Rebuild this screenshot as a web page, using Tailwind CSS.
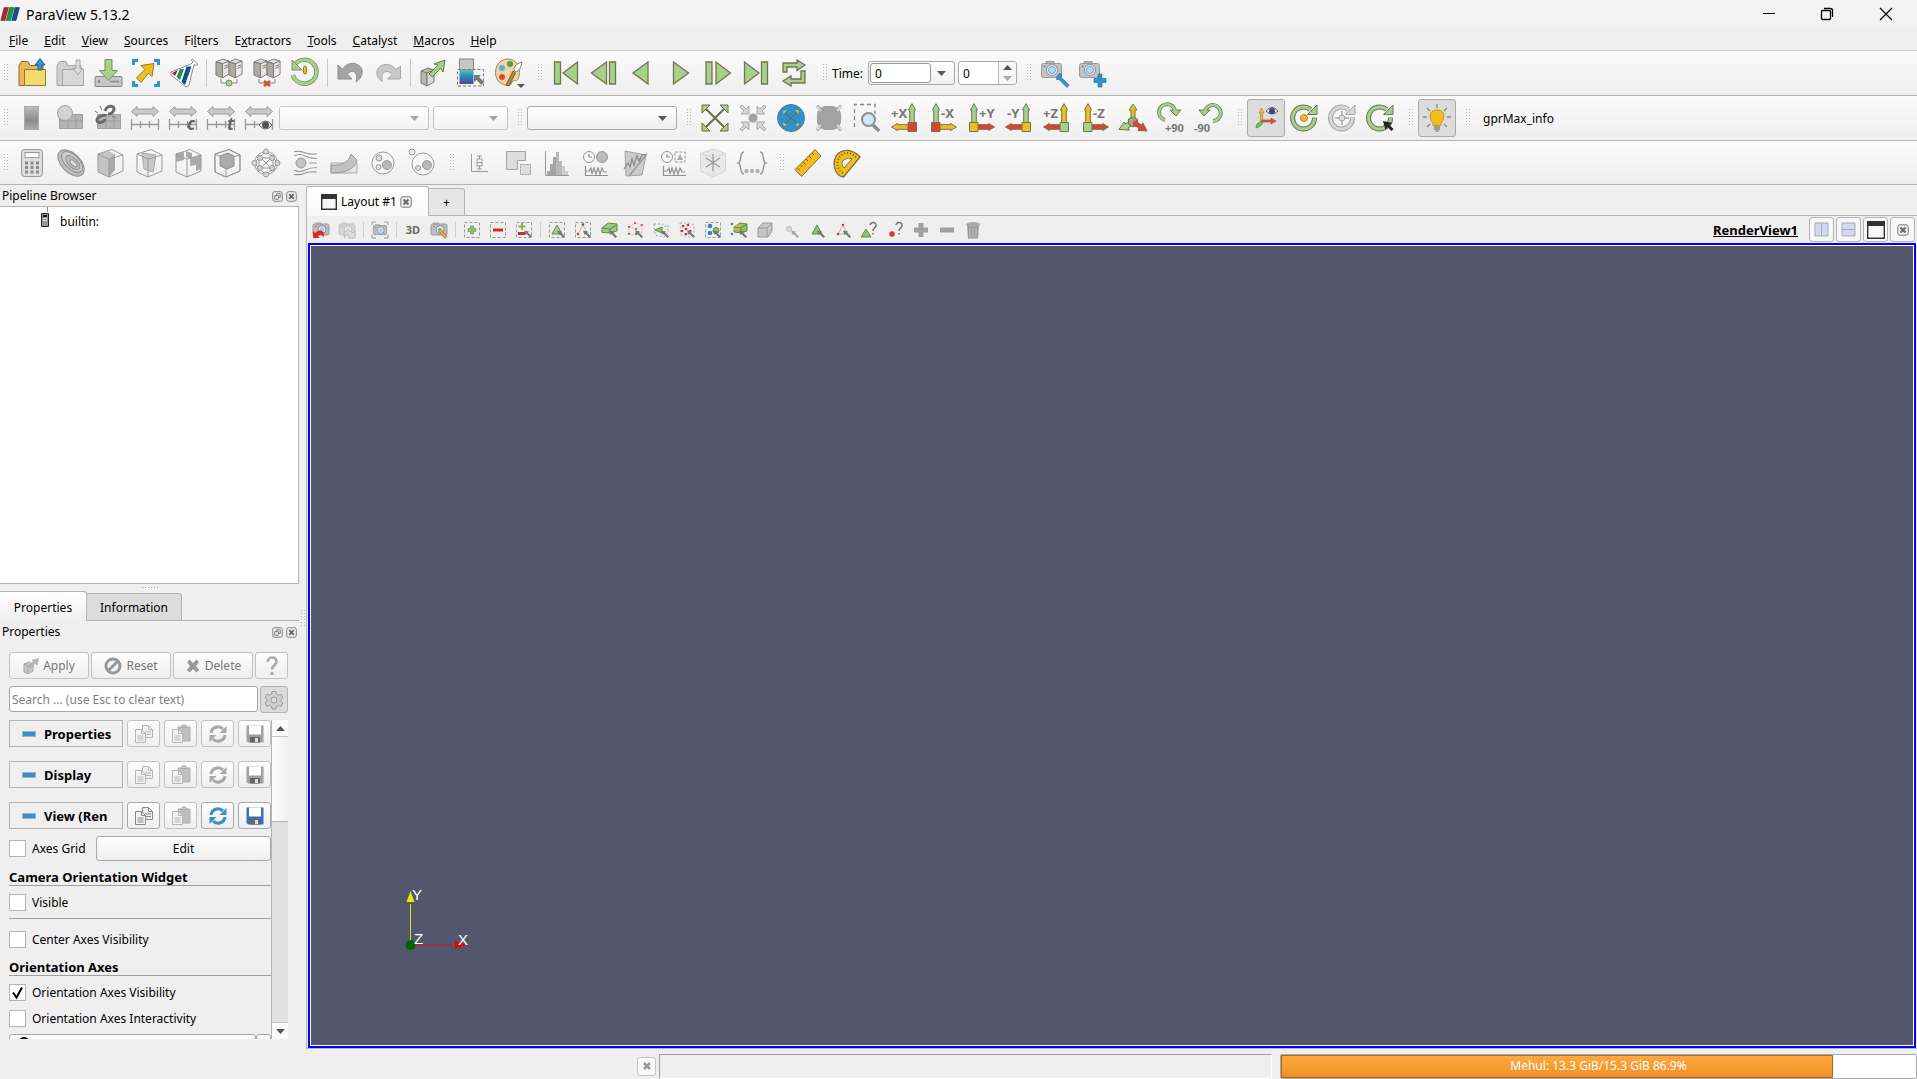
<!DOCTYPE html>
<html lang="en">
<head>
    <meta charset="UTF-8">
    <meta name="viewport" content="width=device-width, initial-scale=1.0">
    <title>ParaView 5.13.2</title>
    <script src="https://cdn.jsdelivr.net/npm/@tailwindcss/browser@4"></script>
</head>
<body class="h-screen overflow-hidden flex flex-col bg-[#efefef] text-black text-[12px] leading-4 font-['Noto_Sans','Open_Sans',sans-serif]">

    <!-- Shared icon parts -->
    <svg class="absolute size-0">
        <defs>
            <linearGradient id="cool" x1="0" y1="0" x2="0" y2="1"><stop offset="0" stop-color="#5cc4a8"/><stop offset=".4" stop-color="#2a8fc4"/><stop offset="1" stop-color="#5a3f96"/></linearGradient>
            <linearGradient id="greys" x1="0" y1="0" x2="0" y2="1"><stop offset="0" stop-color="#bbb"/><stop offset=".6" stop-color="#8c8c8c"/><stop offset="1" stop-color="#aaa"/></linearGradient>
        </defs>
        <symbol id="grip" viewBox="0 0 4 18"><path d="M0 .5H4M0 3.500H4M0 6.500H4M0 9.500H4M0 12.500H4M0 15.500H4" stroke="#b9b9b9" stroke-dasharray="1 2"/></symbol>
        <symbol id="up" viewBox="0 0 8 20"><path d="M4 .7 7.600 7H6.300V19.500H1.700V7H.4z" stroke="#74725a" stroke-linejoin="round"/></symbol>
        <symbol id="right" viewBox="0 0 18 8"><path d="M17.400 4 11.500 7.600V6.300H.5V1.700h11V.4z" stroke="#74725a"/></symbol>
        <symbol id="left" viewBox="0 0 18 8"><path d="M.6 4 6.500 7.600V6.300h11V1.700h-11V.4z" stroke="#74725a"/></symbol>
        <symbol id="out" viewBox="0 0 32 32"><path d="M7 7 25 25M25 7 7 25" stroke="#6b6a50" stroke-width="2"/><path d="M3 3h8l-8 8zM29 3h-8l8 8zM3 29h8l-8-8zM29 29h-8l8-8z" fill="#a6d189" stroke="#6b6a50"/></symbol>
        <symbol id="in" viewBox="0 0 32 32"><path d="M3 5 5 3l4 4 3-3v8H4l3-3zM29 5 27 3l-4 4-3-3v8h8l-3-3zM3 27l2 2 4-4 3 3v-8H4l3 3zM29 27l-2 2-4-4-3 3v-8h8l-3 3z" fill="#d5d5d5" stroke="#aaa"/></symbol>
        <symbol id="server" viewBox="0 0 16 22"><path d="M1 4 8 1l7 2-6 3z" fill="#ddd" stroke="#777"/><path d="M1 4l7 2v15l-7-3z" fill="#abac9c" stroke="#777"/><path d="M8 6l7-3v14l-7 4z" fill="#ece4e6" stroke="#777"/><path d="M10 8.500l4-1.500M10 11l4-2" stroke="#777"/></symbol>
        <symbol id="range" viewBox="0 0 32 32"><path d="M2.500 9.500 8 4.500V7h16V4.500l5.500 5L24 14.500V12H8v2.500z" fill="#c9c9c9" stroke="#9b9b9b"/><path d="M2.500 17v11M29.500 17v11M2.500 22.500h27M11.500 19v7M20.500 19v7" stroke="#999" stroke-width="1.300" fill="none"/></symbol>
        <symbol id="box" viewBox="0 0 32 32"><path d="M4 7 18 2.500 29 8V24L15 30 4 25zM4 7l11 5 14-4M15 12v18" fill="none" stroke="#999"/></symbol>
        <symbol id="camera" viewBox="0 0 32 32"><path d="M7 7h8V4.500H7z" fill="#bbb" stroke="#999"/><rect x="2.500" y="6.500" width="20" height="14" rx="2" fill="#c3c3c3" stroke="#999"/><circle cx="13" cy="13" r="5.500" fill="#e6f2fa" stroke="#8d8d8d"/><circle cx="13" cy="13" r="3.500" fill="#b9dcf3" stroke="#5fa7d6"/><circle cx="5.500" cy="9.500" r="1" fill="#888"/></symbol>
        <symbol id="cw" viewBox="0 0 32 32"><path d="M26.500 15.500A11 11 0 1 1 22.500 7.500" fill="none" stroke="#74725a" stroke-width="5"/><path d="M29 3v9.500H19.500z" fill="#a6d189" stroke="#74725a"/><path d="M26.500 16A11 11 0 1 1 23 8" fill="none" stroke="#a6d189" stroke-width="3"/></symbol>
        <symbol id="select" viewBox="0 0 18 18"><rect x="1.500" y="1.500" width="15" height="15" fill="none" stroke="#9a9a9a" stroke-dasharray="3 2"/></symbol>
        <symbol id="cursor" viewBox="0 0 18 18"><path d="M9 9.500l5 1-1 1 4 4-1.500 1.500-4-4-1 1z" fill="#777"/></symbol>
        <symbol id="cam18" viewBox="0 0 18 18"><rect x="1" y="3" width="16" height="11" rx="1.500" fill="#bdbdbd" stroke="#999"/><rect x="3" y="1.500" width="6" height="2" fill="#aaa"/><circle cx="10" cy="8.500" r="4" fill="#e4f0f8" stroke="#888"/><circle cx="10" cy="8.500" r="2.300" fill="#9fcdee"/><path d="M3 5.500h2" stroke="#d66"/></symbol>
        <symbol id="boxx" viewBox="0 0 12 12"><rect x=".8" y=".8" width="10.400" height="10.400" rx="2" fill="#efefef" stroke="#777"/><path d="M3.500 3.500l5 5M8.500 3.500l-5 5" stroke="#666" stroke-width="2"/></symbol>
        <symbol id="float" viewBox="0 0 12 12"><rect x=".8" y=".8" width="10.400" height="10.400" rx="2" fill="#efefef" stroke="#777"/><path d="M5 5V3h4v4H7M3 5h4v4H3z" fill="none" stroke="#777"/></symbol>
        <symbol id="copy" viewBox="0 0 20 20"><path d="M8.500 1.500h6l4 4v8h-10z" fill="#efefef" stroke="currentColor"/><path d="M14.500 1.500v4h4M11 8h6M11 10.500h6" fill="none" stroke="currentColor"/><path d="M1.500 5.500h6l4 4v9h-10z" fill="#f3f3f3" stroke="currentColor"/><path d="M7.500 5.500v4h4M3.500 12h6M3.500 14h6M3.500 16h6" fill="none" stroke="currentColor"/></symbol>
        <symbol id="paste" viewBox="0 0 20 20"><path d="M7 3h12v14H7z" fill="#bfbfbf" stroke="#b0b0b0"/><path d="M10 3.500 11.500 1h3L16 3.500z" fill="#ccc" stroke="#aaa"/><path d="M1.500 5.500h6l4 4v9h-10z" fill="#f3f3f3" stroke="#b5b5b5"/><path d="M7.500 5.500v4h4M3.500 12h6M3.500 14h6M3.500 16h6" fill="none" stroke="#b5b5b5"/></symbol>
        <symbol id="reload" viewBox="0 0 20 20"><path d="M3 9a7 7 0 0 1 12-4M17 11a7 7 0 0 1-12 4" fill="none" stroke="currentColor" stroke-width="3"/><path d="M18.500 2v7h-7zM1.500 18v-7h7z" fill="currentColor"/></symbol>
        <symbol id="disk" viewBox="0 0 20 20"><path d="M1.500 1.500h17v17H3l-1.500-1.500z" fill="currentColor"/><path d="M4 1.500h12v9H4z" fill="#fff"/><path d="M5 13h10v5.500H5z" fill="#666"/><path d="M10 14h3v4h-3z" fill="#ddd"/></symbol>
        <symbol id="minus" viewBox="0 0 14 6"><rect x=".5" y=".5" width="13" height="5" fill="#3193cb" stroke="#a9b0b0"/></symbol>
        <symbol id="rplay" viewBox="0 0 32 32"><path d="M8.500 5 23.500 16 8.500 27z" fill="#a6d189" stroke="#74725a" stroke-width="1.300"/></symbol>
    </svg>

    <!-- Title bar -->
    <header class="flex items-center h-7 shrink-0 pr-px bg-[#f3f3f3]">
        <svg class="w-5 h-4" viewBox="0 0 20 16"><g stroke-width=".5"><path d="M4 1.500h4.500L5 14.500H.8z" fill="#b5242c" stroke="#722"/><path d="M9.500 1.500H14l-3.500 13H6.200z" fill="#1e9447" stroke="#153"/><path d="M15 1.500h4.500L16 14.500h-4.300z" fill="#10508f" stroke="#123"/></g></svg>
        <h1 class="ml-1.5 pt-0.5 text-[14px]">ParaView 5.13.2</h1>
        <div class="ml-auto flex">
            <button aria-label="Minimize" class="w-[58px] h-7 grid place-items-center"><svg class="size-3" viewBox="0 0 12 12"><path d="M0 5.500h12" stroke="#000"/></svg></button>
            <button aria-label="Restore" class="w-[58px] h-7 grid place-items-center"><svg class="size-3.5" viewBox="0 0 14 14"><rect x="1.500" y="3.500" width="9" height="9" rx="1" fill="none" stroke="#000" stroke-width="1.300"/><path d="M4 1.500h6.500a2 2 0 0 1 2 2V10" fill="none" stroke="#000" stroke-width="1.300"/></svg></button>
            <button aria-label="Close" class="w-[60px] h-7 grid place-items-center"><svg class="size-3.5" viewBox="0 0 14 14"><path d="M1 1l12 12M13 1 1 13" stroke="#000" stroke-width="1.200"/></svg></button>
        </div>
    </header>

    <!-- Menu bar -->
    <nav class="flex items-center h-[23px] shrink-0 pl-px pt-1 border-b border-[#d3d3d3]">
        <button class="px-2"><u>F</u>ile</button>
        <button class="px-2"><u>E</u>dit</button>
        <button class="px-2"><u>V</u>iew</button>
        <button class="px-2"><u>S</u>ources</button>
        <button class="px-2">Fi<u>l</u>ters</button>
        <button class="px-2">E<u>x</u>tractors</button>
        <button class="px-2"><u>T</u>ools</button>
        <button class="px-2"><u>C</u>atalyst</button>
        <button class="px-2"><u>M</u>acros</button>
        <button class="px-2"><u>H</u>elp</button>
    </nav>

    <!-- Main toolbar -->
    <div class="flex items-center h-[45px] shrink-0 border-b border-[#b4b4b4] bg-linear-to-b from-[#fafafa] to-[#efefef]">
        <svg class="w-1 h-[18px] ml-1 mr-[5px]"><use href="#grip"/></svg>
        <button aria-label="Open" class="w-[38px] h-[38px] grid place-items-center"><svg class="size-8" viewBox="0 0 32 32"><path d="M3 8.500 5.500 4.500H12l2 4h13v20H3z" fill="#f0b45c" stroke="#8b6c36"/><path d="M8.500 12.500h21v16h-21z" fill="#f3da6d" stroke="#8b7a36"/><path d="M24 1.500 29 8h-3v5h-4V8h-3z" fill="#2e96d0" stroke="#23688f"/></svg></button>
        <button aria-label="Save state" class="w-[38px] h-[38px] grid place-items-center"><svg class="size-8" viewBox="0 0 32 32"><path d="M3 8.500 5.500 4.500H12l2 4h13v20H3z" fill="#cfcfcf" stroke="#a5a5a5"/><path d="M8.500 12.500h21v16h-21z" fill="#d8d8d8" stroke="#a5a5a5"/><path d="M24 17.500l5-6h-3V3h-4v8.500h-3z" fill="#dcdcdc" stroke="#a5a5a5"/></svg></button>
        <button aria-label="Save data" class="w-[38px] h-[38px] grid place-items-center"><svg class="size-8" viewBox="0 0 32 32"><rect x="3" y="19.500" width="27" height="10" rx="1" fill="#c6c6c6" stroke="#858585"/><circle cx="7" cy="24.500" r="1.200" fill="#777"/><path d="M18 24.500h9" stroke="#888" stroke-width="1.500"/><path d="M13 2.500h7v11h5.500l-9 10-9-10H13z" fill="#a6d189" stroke="#7a8c62"/></svg></button>
        <button aria-label="Load state" class="w-[38px] h-[38px] grid place-items-center"><svg class="size-8" viewBox="0 0 32 32"><path d="M2 8V2h6v3H5v3zM30 8V2h-6v3h3v3zM2 24v6h6v-3H5v-3zM30 24v6h-6v-3h3v-3z" fill="#3193cb"/><path d="M11 8.500l13-2-2 13-3.500-3.500L11 25.500 6.500 21l8.500-8.500z" fill="#f3bd18" stroke="#8b7a36"/></svg></button>
        <button aria-label="Catalyst" class="w-[38px] h-[38px] grid place-items-center"><svg class="size-8" viewBox="0 0 32 32"><path d="M24 2l6 5-2 1.500-2-1L21 28l-3 2L3 18v-3L23 7l2-2-1.500-1.500z" fill="#fff" stroke="#7d8ea5"/><path d="M4 16l6-3-3 6z" fill="#b5242c"/><path d="M12 12h4l-4 11-3.500-3z" fill="#1e9447"/><path d="M18.500 9.500h5L17 28l-3.500-3z" fill="#10508f"/></svg></button>
        <span class="w-px h-7 mx-[3px] bg-[#c9c9c9]"></span>
        <button aria-label="Connect" class="w-[38px] h-[38px] grid place-items-center"><svg class="size-8" viewBox="0 0 32 32"><use href="#server" x="2" y="1" width="15" height="21"/><use href="#server" x="15" y="1" width="15" height="21"/><path d="M8 22v4h16v-4" fill="none" stroke="#888"/><circle cx="16" cy="26" r="3" fill="#a6d189" stroke="#7a8c62"/></svg></button>
        <button aria-label="Disconnect" class="w-[38px] h-[38px] grid place-items-center"><svg class="size-8" viewBox="0 0 32 32"><use href="#server" x="2" y="1" width="15" height="21"/><use href="#server" x="15" y="1" width="15" height="21"/><path d="M8 22v4h16v-4" fill="none" stroke="#888"/><path d="M13 24l6 5M19 24l-6 5" stroke="#dc4434" stroke-width="2.500"/></svg></button>
        <button aria-label="Reset session" class="w-[38px] h-[38px] grid place-items-center"><svg class="size-8" viewBox="0 0 32 32"><path d="M5 9a12 12 0 1 1-1 9" fill="none" stroke="#7d8a66" stroke-width="4.500"/><path d="M5 9a12 12 0 1 1-1 9" fill="none" stroke="#a6d189" stroke-width="3"/><path d="M3 3v10h10z" fill="#a6d189" stroke="#7d8a66"/><rect x="14.500" y="9" width="3" height="8" rx="1.500" fill="#f3bd18" stroke="#8b7a36"/></svg></button>
        <span class="w-px h-7 mx-[3px] bg-[#c9c9c9]"></span>
        <button aria-label="Undo" class="w-[38px] h-[38px] grid place-items-center"><svg class="size-8" viewBox="0 0 32 32"><path d="M4 8v14h14l-5-4.500c5-6 12-3 9 7.500 9-6 8-17-2-18.500-5-.6-8.500 1.500-11.500 5.500z" fill="#a4a4a4" stroke="#8d8d8d"/></svg></button>
        <button aria-label="Redo" class="w-[38px] h-[38px] grid place-items-center"><svg class="size-8" viewBox="0 0 32 32"><path d="M28.500 9v13h-13l4.500-4.500c-5-6-12-3-9.500 7C2 20 3 9 13 7.500c5-.6 8 1.500 11 5z" fill="#c8c8c8" stroke="#a9a9a9"/></svg></button>
        <span class="w-px h-7 mx-[3px] bg-[#c9c9c9]"></span>
        <button aria-label="Auto apply" class="w-[38px] h-[38px] grid place-items-center"><svg class="size-8" viewBox="0 0 32 32"><path d="M4 14l7-3 6 2-7 3zM4 14v12l6 3V16" fill="#b9b9ae" stroke="#777"/><path d="M10 16l7-3v12l-7 4z" fill="#d8d8d8" stroke="#777"/><path d="M12 17l9-9-4-1 11-4-2 12-2.500-4-8 9z" fill="#a6d189" stroke="#5f7a48"/></svg></button>
        <button aria-label="Find data" class="w-[38px] h-[38px] grid place-items-center"><svg class="size-8" viewBox="0 0 32 32"><rect x="4.500" y="2" width="14" height="11" fill="#c6c6c6" stroke="#888"/><rect x="4.500" y="13" width="14" height="14" fill="url(#cool)"/><path d="M2.500 12.500h26v16.500h-26z" fill="none" stroke="#777" stroke-dasharray="3 2"/><path d="M19 18h7l-2 2 5 5-2.500 3-5-5-2.500 2z" fill="#777"/></svg></button>
        <button aria-label="Color palette" class="w-[38px] h-[38px] grid place-items-center"><svg class="size-8" viewBox="0 0 32 32"><path d="M15 2C4 2 0 14 4 22c3 6 10 7 13 6 2-.8 1-3 3-4s5 1 6-5C28 10 23 2 15 2z" fill="#f3d3a4" stroke="#a08655"/><circle cx="9" cy="11" r="3" fill="#4bb3e6"/><circle cx="17" cy="7" r="3" fill="#4f9e45"/><circle cx="9" cy="20" r="3" fill="#e04436"/><path d="M29 5c-7 2-8 6-8 8l2 2c4-2 5-5 6-10z" fill="#fff" stroke="#777"/><path d="M20 14l2.500 2L16 29l-3-1z" fill="#a98a4a" stroke="#76602e"/><path d="M24 27h8l-4 4z" fill="#555"/></svg></button>

        <svg class="w-1 h-[18px] ml-[10px] mr-[5px]"><use href="#grip"/></svg>
        <button aria-label="First frame" class="w-[38px] h-[38px] grid place-items-center"><svg class="size-8" viewBox="0 0 32 32"><path d="M4.500 5h6v22h-6zM27.500 5v22L13 16z" fill="#a6d189" stroke="#74725a" stroke-width="1.300"/></svg></button>
        <button aria-label="Previous frame" class="w-[38px] h-[38px] grid place-items-center"><svg class="size-8" viewBox="0 0 32 32"><path d="M21.500 5h6v22h-6zM18.500 5v22L3.500 16z" fill="#a6d189" stroke="#74725a" stroke-width="1.300"/></svg></button>
        <button aria-label="Reverse" class="w-[38px] h-[38px] grid place-items-center"><svg class="size-8" viewBox="0 0 32 32"><path d="M22 5 7 16l15 11z" fill="#a6d189" stroke="#74725a" stroke-width="1.300"/></svg></button>
        <button aria-label="Play" class="w-[38px] h-[38px] grid place-items-center"><svg class="size-8" viewBox="0 0 32 32"><use href="#rplay" x="1"/></svg></button>
        <button aria-label="Next frame" class="w-[38px] h-[38px] grid place-items-center"><svg class="size-8" viewBox="0 0 32 32"><path d="M4 5h6v22H4zM14 5v22L28.500 16z" fill="#a6d189" stroke="#74725a" stroke-width="1.300"/></svg></button>
        <button aria-label="Last frame" class="w-[38px] h-[38px] grid place-items-center"><svg class="size-8" viewBox="0 0 32 32"><path d="M21.500 5h6v22h-6zM4.500 5v22L19 16z" fill="#a6d189" stroke="#74725a" stroke-width="1.300"/></svg></button>
        <button aria-label="Loop" class="w-[38px] h-[38px] grid place-items-center"><svg class="size-8" viewBox="0 0 32 32"><path d="M5 15V6h14V3l8 5-8 5.500V10H9v5zM27 14v12H13v3l-8-5 8-5v3h10v-8z" fill="#a6d189" stroke="#74725a" stroke-width="1.300"/></svg></button>

        <svg class="w-1 h-[18px] ml-[10px] mr-[5px]"><use href="#grip"/></svg>
        <label for="time" class="pt-0.5">Time:</label>
        <div class="flex items-center ml-[5px] w-[87px] h-6 p-px rounded-[3px] border border-[#a9a9a9] bg-linear-to-b from-white to-[#efefef]">
            <input id="time" type="text" value="0" class="w-[61px] h-full px-1 bg-white border border-[#999] rounded-[3px]">
            <button aria-label="Time values" class="flex-1 grid place-items-center"><svg class="w-[9px] h-[5px]" viewBox="0 0 9 5"><path d="M0 0h9L4.500 5z" fill="#555"/></svg></button>
        </div>
        <div class="flex ml-[3px] w-[59px] h-6 rounded-[3px] border border-[#a9a9a9] bg-white overflow-hidden">
            <input type="text" value="0" aria-label="Time index" class="w-10 px-1 pt-0.5 border-r border-[#b9b9b9]">
            <span class="flex-1 flex flex-col bg-[#f7f7f7]">
                <button aria-label="Step up" class="flex-1 grid place-items-center"><svg class="w-[9px] h-[5px]" viewBox="0 0 9 5"><path d="M0 5h9L4.500 0z" fill="#555"/></svg></button>
                <button aria-label="Step down" class="flex-1 grid place-items-center"><svg class="w-[9px] h-[5px]" viewBox="0 0 9 5"><path d="M0 0h9L4.500 5z" fill="#a9a9a9"/></svg></button>
            </span>
        </div>

        <svg class="w-1 h-[18px] ml-[10px] mr-[5px]"><use href="#grip"/></svg>
        <button aria-label="Adjust camera" class="w-[38px] h-[38px] grid place-items-center"><svg class="size-8" viewBox="0 0 32 32"><use href="#camera"/><path d="M18 19l3-3 1.500 2v2.500L30 28l-2 2.500-8-8h-2.500z" fill="#3193cb" stroke="#23688f" stroke-width=".6"/></svg></button>
        <button aria-label="Add camera link" class="w-[38px] h-[38px] grid place-items-center"><svg class="size-8" viewBox="0 0 32 32"><use href="#camera"/><path d="M21 17h4v4.500h4v4h-4V30h-4v-4.500h-4v-4h4z" fill="#3193cb" stroke="#23688f" stroke-width=".6"/></svg></button>
    </div>

    <!-- Color and camera toolbar -->
    <div class="flex items-center h-[45px] shrink-0 border-b border-[#b4b4b4] bg-linear-to-b from-[#fafafa] to-[#efefef]">
        <svg class="w-1 h-[18px] ml-1 mr-1"><use href="#grip"/></svg>
        <button aria-label="Color legend" class="w-[38px] h-[38px] grid place-items-center"><svg class="size-8" viewBox="0 0 32 32"><rect x="9.500" y="4.500" width="14" height="23" fill="url(#greys)" stroke="#ababab"/></svg></button>
        <button aria-label="Edit color map" class="w-[38px] h-[38px] grid place-items-center"><svg class="size-8" viewBox="0 0 32 32"><path d="M6.500 12.500h23v14h-23z" fill="#b5b5b5" stroke="#a0a0a0"/><path d="M15 12.500v14M23 12.500v14M6.500 19h23" stroke="#9c9c9c"/><circle cx="12" cy="11" r="7.500" fill="#d2d2d2" stroke="#a0a0a0"/></svg></button>
        <button aria-label="Separate color map" class="w-[38px] h-[38px] grid place-items-center"><svg class="size-8" viewBox="0 0 32 32"><path d="M6.500 12.500h23v14h-23z" fill="#b5b5b5" stroke="#a0a0a0"/><path d="M15 12.500v14M23 12.500v14M6.500 19h23" stroke="#9c9c9c"/><path d="M14 9c2-6 9-6 9-2 0 2-2 5-6 5M15 14c-2-2-9 1-9 4 0 4 7 3 8-1" fill="none" stroke="#6c6c6c" stroke-width="3"/><path d="M4 9l3 2M9 4l2 4M21 14l4 2" stroke="#777"/></svg></button>
        <button aria-label="Rescale to data range" class="w-[38px] h-[38px] grid place-items-center"><svg class="size-8" viewBox="0 0 32 32"><use href="#range"/></svg></button>
        <button aria-label="Rescale to custom range" class="w-[38px] h-[38px] grid place-items-center"><svg class="size-8" viewBox="0 0 32 32"><use href="#range"/><text x="20" y="28" font-size="17" font-weight="700" font-style="italic" fill="#666">c</text></svg></button>
        <button aria-label="Rescale over time" class="w-[38px] h-[38px] grid place-items-center"><svg class="size-8" viewBox="0 0 32 32"><use href="#range"/><text x="22" y="28" font-size="17" font-weight="700" font-style="italic" fill="#666">t</text></svg></button>
        <button aria-label="Rescale to visible range" class="w-[38px] h-[38px] grid place-items-center"><svg class="size-8" viewBox="0 0 32 32"><use href="#range"/><path d="M16 23q6.500-8 13 0-6.500 8-13 0z" fill="#efefef" stroke="#666"/><circle cx="22.500" cy="23" r="3.500" fill="#555"/></svg></button>
        <span class="relative ml-px w-[150px] h-6">
            <select aria-label="Color array" disabled class="appearance-none size-full rounded-[3px] border border-[#c4c4c4] bg-linear-to-b from-white to-[#f3f3f3]"></select>
            <svg class="absolute right-2.5 top-[10px] w-[9px] h-[5px]" viewBox="0 0 9 5"><path d="M0 0h9L4.500 5z" fill="#a5a5a5"/></svg>
        </span>
        <span class="relative ml-1 w-[75px] h-6">
            <select aria-label="Component" disabled class="appearance-none size-full rounded-[3px] border border-[#c4c4c4] bg-linear-to-b from-white to-[#f3f3f3]"></select>
            <svg class="absolute right-2.5 top-[10px] w-[9px] h-[5px]" viewBox="0 0 9 5"><path d="M0 0h9L4.500 5z" fill="#a5a5a5"/></svg>
        </span>
        <svg class="w-1 h-[18px] ml-[10px] mr-[5px]"><use href="#grip"/></svg>
        <span class="relative w-[150px] h-6">
            <select aria-label="Representation" class="appearance-none size-full rounded-[3px] border border-[#a9a9a9] bg-linear-to-b from-white to-[#efefef]"></select>
            <svg class="absolute right-2.5 top-[10px] w-[9px] h-[5px]" viewBox="0 0 9 5"><path d="M0 0h9L4.500 5z" fill="#555"/></svg>
        </span>

        <svg class="w-1 h-[18px] ml-[10px] mr-[5px]"><use href="#grip"/></svg>
        <button aria-label="Reset camera" class="w-[38px] h-[38px] grid place-items-center"><svg class="size-8" viewBox="0 0 32 32"><use href="#out"/></svg></button>
        <button aria-label="Zoom to data" class="w-[38px] h-[38px] grid place-items-center"><svg class="size-8" viewBox="0 0 32 32"><use href="#in"/><circle cx="16" cy="16" r="4.500" fill="#a2a2a2"/></svg></button>
        <button aria-label="Reset camera closest" class="w-[38px] h-[38px] grid place-items-center"><svg class="size-8" viewBox="0 0 32 32"><circle cx="16" cy="16" r="13.500" fill="#2b93d1" stroke="#5f7480"/><use href="#out" x="6" y="6" width="20" height="20"/></svg></button>
        <button aria-label="Zoom closest to data" class="w-[38px] h-[38px] grid place-items-center"><svg class="size-8" viewBox="0 0 32 32"><use href="#in"/><rect x="4" y="4" width="24" height="24" rx="9" fill="#a2a2a2"/><path d="M3 4l5 5M29 4l-5 5M3 28l5-5M29 28l-5-5" stroke="#d5d5d5" stroke-width="2"/></svg></button>
        <button aria-label="Zoom to box" class="w-[38px] h-[38px] grid place-items-center"><svg class="size-8" viewBox="0 0 32 32"><path d="M3.500 25V2.500H24V12" fill="none" stroke="#888" stroke-width="1.300" stroke-dasharray="4 3"/><circle cx="17.500" cy="17.500" r="6.500" fill="#cbe7f8" stroke="#8d8d8d" stroke-width="2"/><path d="M22 23l6 6" stroke="#8d8d8d" stroke-width="3.500"/></svg></button>
        <button aria-label="+X" class="w-[38px] h-[38px] grid place-items-center"><svg class="size-8" viewBox="0 0 32 32"><use href="#left" x="2" y="21" width="18" height="8" fill="#f3bd18"/><use href="#up" x="19" y="1" width="8" height="20" fill="#a6d189"/><path d="M19 20.500h8.500v9H19z" fill="#e0402f" stroke="#74725a"/><text x="2" y="16" font-size="13" font-weight="700" fill="#777">+X</text></svg></button>
        <button aria-label="-X" class="w-[38px] h-[38px] grid place-items-center"><svg class="size-8" viewBox="0 0 32 32"><use href="#right" x="12" y="21" width="18" height="8" fill="#f3bd18"/><use href="#up" x="5" y="1" width="8" height="20" fill="#a6d189"/><path d="M4.500 20.500H13v9H4.500z" fill="#e0402f" stroke="#74725a"/><text x="14" y="16" font-size="13" font-weight="700" fill="#777">-X</text></svg></button>
        <button aria-label="+Y" class="w-[38px] h-[38px] grid place-items-center"><svg class="size-8" viewBox="0 0 32 32"><use href="#right" x="12" y="21" width="18" height="8" fill="#e0402f"/><use href="#up" x="5" y="1" width="8" height="20" fill="#a6d189"/><path d="M4.500 20.500H13v9H4.500z" fill="#f3bd18" stroke="#74725a"/><text x="14" y="16" font-size="13" font-weight="700" fill="#777">+Y</text></svg></button>
        <button aria-label="-Y" class="w-[38px] h-[38px] grid place-items-center"><svg class="size-8" viewBox="0 0 32 32"><use href="#left" x="2" y="21" width="18" height="8" fill="#e0402f"/><use href="#up" x="19" y="1" width="8" height="20" fill="#a6d189"/><path d="M19 20.500h8.500v9H19z" fill="#f3bd18" stroke="#74725a"/><text x="4" y="16" font-size="13" font-weight="700" fill="#777">-Y</text></svg></button>
        <button aria-label="+Z" class="w-[38px] h-[38px] grid place-items-center"><svg class="size-8" viewBox="0 0 32 32"><use href="#left" x="2" y="21" width="18" height="8" fill="#e0402f"/><use href="#up" x="19" y="1" width="8" height="20" fill="#f3bd18"/><path d="M19 20.500h8.500v9H19z" fill="#a6d189" stroke="#74725a"/><text x="2" y="16" font-size="13" font-weight="700" fill="#777">+Z</text></svg></button>
        <button aria-label="-Z" class="w-[38px] h-[38px] grid place-items-center"><svg class="size-8" viewBox="0 0 32 32"><use href="#right" x="12" y="21" width="18" height="8" fill="#e0402f"/><use href="#up" x="5" y="1" width="8" height="20" fill="#f3bd18"/><path d="M4.500 20.500H13v9H4.500z" fill="#a6d189" stroke="#74725a"/><text x="14" y="16" font-size="13" font-weight="700" fill="#777">-Z</text></svg></button>
        <button aria-label="Isometric view" class="w-[38px] h-[38px] grid place-items-center"><svg class="size-8" viewBox="0 0 32 32"><path d="M16 2l4 6h-2v9h-4V8h-2z" fill="#f3bd18" stroke="#74725a"/><path d="M14 19l2 4-5 3 1.500 2L2 27.500 7 20l1 2z" fill="#a6d189" stroke="#74725a"/><path d="M18 19l-2 4 6 3-1 2.500 9 .5-4-8-1.500 2z" fill="#e0402f" stroke="#74725a"/><path d="M11.500 17l4.500-2 4.500 2v5L16 25l-4.500-3z" fill="#8fb57a" stroke="#74725a"/><path d="M16 20l4.500-2.500v5L16 25z" fill="#e0402f"/></svg></button>
        <button aria-label="Rotate +90" class="w-[38px] h-[38px] grid place-items-center"><svg class="size-8" viewBox="0 0 32 32"><path d="M10 18A8 8 0 1 1 20 9" fill="none" stroke="#74725a" stroke-width="4"/><path d="M15 8h11l-5 6z" fill="#a6d189" stroke="#74725a"/><path d="M10 18A8 8 0 1 1 20 9" fill="none" stroke="#a6d189" stroke-width="2.500"/><text x="10" y="30" font-size="11" font-weight="700" fill="#777">+90</text></svg></button>
        <button aria-label="Rotate -90" class="w-[38px] h-[38px] grid place-items-center"><svg class="size-8" viewBox="0 0 32 32"><path d="M20 19A8 8 0 1 0 12 9" fill="none" stroke="#74725a" stroke-width="4"/><path d="M17 8H6l5 6z" fill="#a6d189" stroke="#74725a"/><path d="M20 19A8 8 0 1 0 12 9" fill="none" stroke="#a6d189" stroke-width="2.500"/><text x="1" y="30" font-size="11" font-weight="700" fill="#777">-90</text></svg></button>

        <svg class="w-1 h-[18px] ml-[10px] mr-[5px]"><use href="#grip"/></svg>
        <button aria-label="Orientation axes" aria-pressed="true" class="w-[38px] h-[38px] grid place-items-center rounded-[3px] border border-[#aaa] bg-[#dcdcdc]"><svg class="size-8" viewBox="0 0 32 32"><path d="M11.500 6l2.500 5h-1.500v8h-2v-8H9z" fill="#f3bd18" stroke="#98783a" stroke-width=".6"/><path d="M12 18h9v-2l5 3-5 3v-2h-9z" fill="#e8502f" stroke="#944" stroke-width=".6"/><path d="M11 19l2 2-4 4-3 1 1-4z" fill="#5fcc3c" stroke="#383" stroke-width=".6"/><path d="M16 9q6-7 12 0-6 6-12 0z" fill="#fff" stroke="#555"/><circle cx="22" cy="9" r="3" fill="#3b3f8c"/></svg></button>
        <button aria-label="Show center" class="w-[38px] h-[38px] grid place-items-center"><svg class="size-8" viewBox="0 0 32 32"><use href="#cw"/><circle cx="16" cy="16" r="3.500" fill="#f3bd18" stroke="#b38c2e"/></svg></button>
        <button aria-label="Reset center" class="w-[38px] h-[38px] grid place-items-center"><svg class="size-8 grayscale opacity-60" viewBox="0 0 32 32"><use href="#cw"/><circle cx="16" cy="16" r="3" fill="#ccc" stroke="#777"/><path d="M16 9v5M16 18v5M9 16h5M18 16h5" stroke="#777" stroke-width="1.500"/></svg></button>
        <button aria-label="Pick center" class="w-[38px] h-[38px] grid place-items-center"><svg class="size-8" viewBox="0 0 32 32"><use href="#cw"/><path d="M19 19l9 2-2.500 2 4 4-2 2-4-4-2 3z" fill="#222"/></svg></button>

        <svg class="w-1 h-[18px] ml-[10px] mr-[5px]"><use href="#grip"/></svg>
        <button aria-label="Light kit" aria-pressed="true" class="w-[38px] h-[38px] grid place-items-center rounded-[3px] border border-[#aaa] bg-[#dcdcdc]"><svg class="size-8" viewBox="0 0 32 32"><path d="M16 2v4M6 6l3 3M26 6l-3 3M2 15h4M26 15h4M6 25l3-3M26 25l-3-3" stroke="#888" stroke-width="1.300"/><path d="M16 8c-9 0-8 9-4 13v2.500h8V21c4-4 5-13-4-13z" fill="#f3bd18" stroke="#c4952b"/><path d="M13 25h6M13 27h6M14.500 29h3" stroke="#888" stroke-width="1.500"/></svg></button>

        <svg class="w-1 h-[18px] ml-[10px] mr-[5px]"><use href="#grip"/></svg>
        <button class="px-2 pt-0.5">gprMax_info</button>
    </div>

    <!-- Filters toolbar -->
    <div class="flex items-center h-11 shrink-0 border-b border-[#b4b4b4] bg-linear-to-b from-[#fafafa] to-[#efefef]">
        <svg class="w-1 h-[18px] ml-1 mr-1"><use href="#grip"/></svg>
        <button aria-label="Calculator" class="w-[39px] h-[38px] grid place-items-center"><svg class="size-8" viewBox="0 0 32 32"><rect x="5.500" y="2.500" width="21" height="27" rx="3" fill="#ddd" stroke="#999"/><rect x="9" y="5.500" width="14" height="5" fill="#fff" stroke="#999"/><path d="M9 16h14M9 20.500h14M9 25h14" stroke="#8d8d8d" stroke-width="3" stroke-dasharray="3 2.500"/></svg></button>
        <button aria-label="Contour" class="w-[39px] h-[38px] grid place-items-center"><svg class="size-8" viewBox="0 0 32 32"><g transform="rotate(45 16 16)" stroke="#8f8f8f" fill="#bbb"><ellipse cx="16" cy="16" rx="16" ry="9.500"/><ellipse cx="16" cy="14.500" rx="13" ry="7" fill="#ccc"/><ellipse cx="17" cy="14.500" rx="9" ry="4.500"/><ellipse cx="18" cy="14.500" rx="4.500" ry="2.200" fill="#ddd"/></g></svg></button>
        <button aria-label="Clip" class="w-[39px] h-[38px] grid place-items-center"><svg class="size-8" viewBox="0 0 32 32"><path d="M4 7l10-3 7 3-6 5v18L4 25z" fill="#c4c4c4"/><path d="M15 12l6-5v16l-6 7z" fill="#aaa"/><use href="#box"/></svg></button>
        <button aria-label="Slice" class="w-[39px] h-[38px] grid place-items-center"><svg class="size-8" viewBox="0 0 32 32"><path d="M9 6l14 2-3 17-9-3z" fill="#c8c8c8" stroke="#aaa"/><use href="#box"/></svg></button>
        <button aria-label="Threshold" class="w-[39px] h-[38px] grid place-items-center"><svg class="size-8" viewBox="0 0 32 32"><path d="M4 7l8-2v8l-8 2zM18 12l11-4v14l-5 2v-6l-6 1zM14 4l6 2v6l-6-2z" fill="#aaa"/><use href="#box"/></svg></button>
        <button aria-label="Extract subset" class="w-[39px] h-[38px] grid place-items-center"><svg class="size-8" viewBox="0 0 32 32"><path d="M4 7 18 2.500 29 8V24L15 30 4 25z" fill="#f4f4f4" stroke="#999"/><use href="#box"/><path d="M9 9l8-3 6 3v10l-7 3-7-3z" fill="#aaa" stroke="#949494"/></svg></button>
        <button aria-label="Glyph" class="w-[39px] h-[38px] grid place-items-center"><svg class="size-8" viewBox="0 0 32 32"><g fill="#d5d5d5" stroke="#999"><circle cx="16" cy="16" r="11.500" fill="none"/><path d="M16 4L4 16l12 12 12-12zM8 8l16 16M24 8 8 24M9 11h14v10H9z" fill="none"/><circle cx="16" cy="4.500" r="2.500"/><circle cx="16" cy="27.500" r="2.500"/><circle cx="4.500" cy="16" r="2.500"/><circle cx="27.500" cy="16" r="2.500"/><circle cx="10" cy="11" r="2.500"/><circle cx="22" cy="11" r="2.500"/><circle cx="10" cy="21" r="2.500"/><circle cx="22" cy="21" r="2.500"/></g></svg></button>
        <button aria-label="Stream tracer" class="w-[39px] h-[38px] grid place-items-center"><svg class="size-8" viewBox="0 0 32 32"><path d="M5 4.500c5 0 6-1 10 1s6 1.500 13 1.500M5 9c5-2 7-2 11 0s6 2.500 12 2.500M20 16h8M5 27.500c5 0 6 1 10-1s6-1.500 13-1.500M5 23c5 2 7 2 11 0s6-2.500 12-2.500" fill="none" stroke="#999" stroke-width="1.200"/><circle cx="12" cy="16" r="5" fill="#c4c4c4" stroke="#999"/></svg></button>
        <button aria-label="Warp by vector" class="w-[39px] h-[38px] grid place-items-center"><svg class="size-8" viewBox="0 0 32 32"><path d="M11 16h18v10H3V16z" fill="#e6e6e6" stroke="#aaa"/><path d="M3 18c11 1 18-3 20-11l6 6c-2 9-11 13-26 13z" fill="#c2c2c2" stroke="#999"/></svg></button>
        <button aria-label="Group datasets" class="w-[39px] h-[38px] grid place-items-center"><svg class="size-8" viewBox="0 0 32 32"><g stroke="#999"><circle cx="16" cy="16" r="11" fill="#f6f6f6"/><circle cx="12" cy="11" r="3" fill="#ddd"/><circle cx="20" cy="18" r="4.500" fill="#b8b8b8"/><circle cx="11.500" cy="20" r="2.500" fill="#ddd"/></g></svg></button>
        <button aria-label="Extract level" class="w-[39px] h-[38px] grid place-items-center"><svg class="size-8" viewBox="0 0 32 32"><g stroke="#999"><circle cx="17" cy="17" r="11" fill="#f6f6f6"/><circle cx="6" cy="5" r="3" fill="#eee"/><circle cx="21" cy="18" r="4.500" fill="#b8b8b8"/><circle cx="12" cy="21" r="2.500" fill="#ddd"/></g></svg></button>

        <svg class="w-1 h-[18px] ml-[9px] mr-[5px]"><use href="#grip"/></svg>
        <button aria-label="Box plot" class="w-[39px] h-[38px] grid place-items-center"><svg class="size-8" viewBox="0 0 32 32"><path d="M8.500 7v17.500H25M16.500 9v3M16.500 19v3M14 9h5M14 22h5M14 12h5v7h-5zM14 15.500h5" fill="none" stroke="#999"/></svg></button>
        <button aria-label="Plot on selection" class="w-[39px] h-[38px] grid place-items-center"><svg class="size-8" viewBox="0 0 32 32"><path d="M4.500 4.500h19v9h-8v9h-11z" fill="#ddd" stroke="#a3a3a3"/><rect x="18.500" y="17.500" width="10" height="10" fill="#ddd" stroke="#999" stroke-dasharray="2 1"/></svg></button>
        <button aria-label="Histogram" class="w-[39px] h-[38px] grid place-items-center"><svg class="size-8" viewBox="0 0 32 32"><path d="M4.500 4v24.500H28" fill="none" stroke="#999"/><path d="M6 24h3v4H6zM9 17h3v11H9zM12 10h3v18h-3z" fill="#a3a3a3"/><path d="M15 5h3v23h-3zM18 14h3v14h-3z" fill="#b8b8b8"/><path d="M21 19h3v9h-3zM24 24h3v4h-3z" fill="#ccc"/></svg></button>
        <button aria-label="Plot over time" class="w-[39px] h-[38px] grid place-items-center"><svg class="size-8" viewBox="0 0 32 32"><circle cx="9" cy="10" r="5.500" fill="#f8f8f8" stroke="#999"/><path d="M9 7v3h3M5.500 19v9.500H28M6 24h3l2-3 1 6 2-6 2 6 2-6 2 6 2-6 2 4h3" fill="none" stroke="#909090" stroke-width="1.200"/><circle cx="22" cy="10" r="5.500" fill="#bbb" stroke="#999"/></svg></button>
        <button aria-label="Plot over line" class="w-[39px] h-[38px] grid place-items-center"><svg class="size-8" viewBox="0 0 32 32"><path d="M6 4l21 4-4 20-16 1z" fill="#ccc" stroke="#a5a5a5"/><path d="M5 22l4-6 2 4 2-8 2 6 3-9 2 5 3-6 5-1" fill="none" stroke="#888" stroke-width="1.200"/><path d="M27 8 10 29" stroke="#999" stroke-width="1.500"/></svg></button>
        <button aria-label="Plot selection over time" class="w-[39px] h-[38px] grid place-items-center"><svg class="size-8" viewBox="0 0 32 32"><circle cx="9" cy="10" r="5.500" fill="#f8f8f8" stroke="#999"/><path d="M9 7v3h3M5.500 19v9.500H28M6 24h3l2-3 1 6 2-6 2 6 2-6 2 6 2-6 2 4h3" fill="none" stroke="#909090" stroke-width="1.200"/><rect x="17" y="5" width="10" height="10" fill="none" stroke="#999" stroke-dasharray="3 1.500"/><path d="M22 7l3 6h-6z" fill="#aaa"/></svg></button>
        <button aria-label="Probe" class="w-[39px] h-[38px] grid place-items-center"><svg class="size-8" viewBox="0 0 32 32"><path d="M16 2 28.500 6.500V24L16 30 3.500 24V6.500z" fill="#e8e8e8" stroke="#d5d5d5"/><path d="M3.500 6.500 16 11l12.500-4.500M16 11v19" fill="none" stroke="#d5d5d5"/><path d="M16 7v17M9 11l14 9M9 20l14-9" stroke="#999" stroke-width="1.200"/></svg></button>
        <button aria-label="Programmable filter" class="w-[39px] h-[38px] grid place-items-center"><svg class="size-8" viewBox="0 0 32 32"><path d="M8 5C3 5 6 15 2.500 16 6 17 3 27 8 27M24 5c5 0 2 10 5.500 11-3.500 1-.5 11-5.500 11" fill="none" stroke="#999" stroke-width="1.500"/><circle cx="10.500" cy="24" r="2" fill="#aaa"/><circle cx="16" cy="24" r="2" fill="#aaa"/><circle cx="21.500" cy="24" r="2" fill="#aaa"/></svg></button>

        <svg class="w-1 h-[18px] ml-[9px] mr-1"><use href="#grip"/></svg>
        <button aria-label="Ruler" class="w-[39px] h-[38px] grid place-items-center"><svg class="size-8" viewBox="0 0 32 32"><path d="M23 2.500 29 9 9.500 29.500 3 22.500z" fill="#f3bd18" stroke="#7d6f45"/><path d="M5.500 21l2.500 2.500M8.500 18l2 2M11 15l2.500 2.500M14 12l2 2M17 9l2.500 2.500M20 6l2 2" stroke="#6b5c22"/></svg></button>
        <button aria-label="Protractor" class="w-[39px] h-[38px] grid place-items-center"><svg class="size-8" viewBox="0 0 32 32"><path d="M29 10 12.500 30C5 29 2 20 3.500 13 6 3 19-1 29 10z" fill="#f3bd18" stroke="#7d6f45" stroke-width="1.300"/><path d="M21 12l-8 9c-3-3-2-7 0-8s5-3 8-1z" fill="#f5f5f5" stroke="#7d6f45"/><path d="M25 10C18 3 9 6 7 13c-1.500 5 0 10 5 13" fill="none" stroke="#6b5c22" stroke-width="2" stroke-dasharray="1 2"/></svg></button>
    </div>

    <main class="flex flex-1 min-h-0">
        <!-- Left docks -->
        <aside class="flex flex-col w-[299px] shrink-0 min-h-0">
            <div class="flex items-center h-[21px] pl-0.5 pr-0.5 pt-px">
                <h2>Pipeline Browser</h2>
                <button aria-label="Float" class="ml-auto"><svg class="size-[11px]" viewBox="0 0 12 12"><use href="#float"/></svg></button>
                <button aria-label="Close" class="ml-[3px]"><svg class="size-[11px]" viewBox="0 0 12 12"><use href="#boxx"/></svg></button>
            </div>
            <div class="flex-1 bg-white border border-l-0 border-[#b4b4b4]">
                <div class="flex items-start pl-10">
                    <svg class="w-[10px] h-[22px]" viewBox="0 0 10 22"><path d="M7.500 0v5" stroke="#888"/><path d="M1.500 6.500h7v13h-7z" fill="#999" stroke="#222"/><path d="M3 9h4" stroke="#111" stroke-width="2"/><path d="M3 11.500h4M3 13.500h4" stroke="#ddd"/></svg>
                    <span class="ml-2.5 mt-[7px]">builtin:</span>
                </div>
            </div>
            <div class="h-[7px] grid place-items-center"><svg class="w-4 h-1" viewBox="0 0 16 4"><path d="M0 1.500h16" stroke="#aaa" stroke-dasharray="1 2"/></svg></div>
            <div class="flex items-end h-[30px]">
                <button class="w-[87px] h-[30px] pt-0.5 border-t border-r border-[#b4b4b4] rounded-tr-[3px] bg-linear-to-b from-white to-[#efefef]">Properties</button>
                <button class="w-[95px] h-7 pt-0.5 border border-l-0 border-[#b4b4b4] rounded-tr-[3px] bg-[#dcdcdc]">Information</button>
                <span class="flex-1 border-b border-[#b4b4b4]"></span>
            </div>
            <div class="flex items-center h-[22px] pl-0.5 pr-0.5">
                <h2>Properties</h2>
                <button aria-label="Float" class="ml-auto"><svg class="size-[11px]" viewBox="0 0 12 12"><use href="#float"/></svg></button>
                <button aria-label="Close" class="ml-[3px]"><svg class="size-[11px]" viewBox="0 0 12 12"><use href="#boxx"/></svg></button>
            </div>
            <div class="flex gap-0.5 pl-[9px] pr-[11px] mt-[9px] text-[#777]">
                <button class="flex-1 h-[27px] flex items-center justify-center gap-1 pt-px rounded-[3px] border border-[#c2c2c2] bg-linear-to-b from-[#fdfdfd] to-[#efefef]"><svg class="size-4" viewBox="0 0 16 16"><path d="M1 6l5-2 4 2v7l-5 3-4-2z" fill="#c9c9c9" stroke="#a5a5a5"/><path d="M1 6l4 2 5-2M5 8v7" fill="none" stroke="#a5a5a5"/><path d="M6 8l5-5-2-.5L15.500.5 14 7l-1.500-2-5 5z" fill="#b9b9b9" stroke="#999" stroke-width=".6"/></svg>Apply</button>
                <button class="flex-1 h-[27px] flex items-center justify-center gap-1 pt-px rounded-[3px] border border-[#c2c2c2] bg-linear-to-b from-[#fdfdfd] to-[#efefef]"><svg class="size-[18px]" viewBox="0 0 18 18"><circle cx="9" cy="9" r="7" fill="none" stroke="#999" stroke-width="3"/><path d="M4 14 14 4" stroke="#999" stroke-width="3"/></svg>Reset</button>
                <button class="flex-1 h-[27px] flex items-center justify-center gap-1 pt-px rounded-[3px] border border-[#c2c2c2] bg-linear-to-b from-[#fdfdfd] to-[#efefef]"><svg class="size-4" viewBox="0 0 16 16"><path d="M2 4 4.500 1.500 8 5l3.500-3.500L14 4l-3 4 3 4-2.500 2.500L8 11l-3.500 3.500L2 12l3-4z" fill="#999"/></svg>Delete</button>
                <button aria-label="Help" class="w-[33px] h-[27px] grid place-items-center rounded-[3px] border border-[#c2c2c2] bg-linear-to-b from-[#fdfdfd] to-[#efefef]"><svg class="w-3 h-5" viewBox="0 0 12 20"><path d="M1.500 6c0-6 9-6 9-.5 0 4-4.500 3.500-4.500 8" fill="none" stroke="#aaa" stroke-width="2.500"/><circle cx="6" cy="17.500" r="1.800" fill="#aaa"/></svg></button>
            </div>
            <div class="flex gap-0.5 pl-[9px] pr-[11px] mt-[7px]">
                <input type="text" aria-label="Search properties" placeholder="Search ... (use Esc to clear text)" class="flex-1 min-w-0 h-[26px] px-0.5 bg-white border border-[#a5a5a5] rounded-[3px] placeholder:text-[#7f7f7f]">
                <button aria-label="Advanced properties" aria-pressed="true" class="w-7 h-[27px] grid place-items-center rounded-[3px] border border-[#b4b4b4] bg-[#dcdcdc]"><svg class="size-5" viewBox="0 0 20 20"><path d="M8 1.500h4l.5 2.500 2 1.200 2.500-1 2 3.500-2 1.800v1.800l2 1.500-2 3.500-2.500-1-2 1.200-.5 2.500H8l-.5-2.500-2-1.200-2.500 1-2-3.500 2-1.500V9.500l-2-1.800 2-3.500 2.500 1 2-1.200z" fill="#cfcfcf" stroke="#999"/><circle cx="10" cy="10" r="3" fill="#dcdcdc" stroke="#999"/></svg></button>
            </div>

            <!-- Property panel -->
            <div class="flex h-[319px] mt-[7px] mb-[14px] pl-[9px] pr-[11px] shrink-0 overflow-hidden">
                <div class="flex-1 min-w-0 overflow-hidden">
                    <div class="flex gap-1 mb-[14px]">
                        <button class="flex items-center w-[114px] h-[27px] pl-3 border border-[#b4b4b4] text-[13px] font-bold"><svg class="w-[14px] h-1.5 mr-2 shrink-0"><use href="#minus"/></svg>Properties</button>
                        <button aria-label="Copy" class="flex-1 h-[27px] grid place-items-center rounded-[3px] border border-[#c2c2c2] bg-linear-to-b from-[#fdfdfd] to-[#efefef] text-[#b5b5b5]"><svg class="size-5"><use href="#copy"/></svg></button>
                        <button aria-label="Paste" class="flex-1 h-[27px] grid place-items-center rounded-[3px] border border-[#c2c2c2] bg-linear-to-b from-[#fdfdfd] to-[#efefef]"><svg class="size-5"><use href="#paste"/></svg></button>
                        <button aria-label="Restore defaults" class="flex-1 h-[27px] grid place-items-center rounded-[3px] border border-[#c2c2c2] bg-linear-to-b from-[#fdfdfd] to-[#efefef] text-[#a9a9a9]"><svg class="size-5"><use href="#reload"/></svg></button>
                        <button aria-label="Save defaults" class="flex-1 h-[27px] grid place-items-center rounded-[3px] border border-[#c2c2c2] bg-linear-to-b from-[#fdfdfd] to-[#efefef] text-[#a0a0a0]"><svg class="size-5"><use href="#disk"/></svg></button>
                    </div>
                    <div class="flex gap-1 mb-[14px]">
                        <button class="flex items-center w-[114px] h-[27px] pl-3 border border-[#b4b4b4] text-[13px] font-bold"><svg class="w-[14px] h-1.5 mr-2 shrink-0"><use href="#minus"/></svg>Display</button>
                        <button aria-label="Copy" class="flex-1 h-[27px] grid place-items-center rounded-[3px] border border-[#c2c2c2] bg-linear-to-b from-[#fdfdfd] to-[#efefef] text-[#b5b5b5]"><svg class="size-5"><use href="#copy"/></svg></button>
                        <button aria-label="Paste" class="flex-1 h-[27px] grid place-items-center rounded-[3px] border border-[#c2c2c2] bg-linear-to-b from-[#fdfdfd] to-[#efefef]"><svg class="size-5"><use href="#paste"/></svg></button>
                        <button aria-label="Restore defaults" class="flex-1 h-[27px] grid place-items-center rounded-[3px] border border-[#c2c2c2] bg-linear-to-b from-[#fdfdfd] to-[#efefef] text-[#a9a9a9]"><svg class="size-5"><use href="#reload"/></svg></button>
                        <button aria-label="Save defaults" class="flex-1 h-[27px] grid place-items-center rounded-[3px] border border-[#c2c2c2] bg-linear-to-b from-[#fdfdfd] to-[#efefef] text-[#a0a0a0]"><svg class="size-5"><use href="#disk"/></svg></button>
                    </div>
                    <div class="flex gap-1">
                        <button class="flex items-center w-[114px] h-[27px] pl-3 border border-[#b4b4b4] text-[13px] font-bold whitespace-nowrap"><svg class="w-[14px] h-1.5 mr-2 shrink-0"><use href="#minus"/></svg>View (Ren</button>
                        <button aria-label="Copy" class="flex-1 h-[27px] grid place-items-center rounded-[3px] border border-[#a9a9a9] bg-linear-to-b from-[#fdfdfd] to-[#efefef] text-[#848a8a]"><svg class="size-5"><use href="#copy"/></svg></button>
                        <button aria-label="Paste" class="flex-1 h-[27px] grid place-items-center rounded-[3px] border border-[#c2c2c2] bg-linear-to-b from-[#fdfdfd] to-[#efefef]"><svg class="size-5"><use href="#paste"/></svg></button>
                        <button aria-label="Restore defaults" class="flex-1 h-[27px] grid place-items-center rounded-[3px] border border-[#a9a9a9] bg-linear-to-b from-[#fdfdfd] to-[#efefef] text-[#3a94b8]"><svg class="size-5"><use href="#reload"/></svg></button>
                        <button aria-label="Save defaults" class="flex-1 h-[27px] grid place-items-center rounded-[3px] border border-[#a9a9a9] bg-linear-to-b from-[#fdfdfd] to-[#efefef] text-[#3f6db3]"><svg class="size-5"><use href="#disk"/></svg></button>
                    </div>
                    <div class="flex items-center mt-[7px]">
                        <label class="flex items-center gap-1.5 w-[87px]"><input type="checkbox" class="appearance-none size-[17px] bg-white border border-[#b4b4b4]">Axes Grid</label>
                        <button class="flex-1 h-[25px] pt-px rounded-[3px] border border-[#a9a9a9] bg-linear-to-b from-[#fdfdfd] to-[#efefef]">Edit</button>
                    </div>
                    <h3 class="mt-2 h-[17px] text-[13px] leading-4 font-bold border-b border-[#9f9f9f]">Camera Orientation Widget</h3>
                    <label class="flex items-center gap-1.5 mt-2"><input type="checkbox" class="appearance-none size-[17px] bg-white border border-[#b4b4b4]">Visible</label>
                    <hr class="mt-[7px] border-[#9f9f9f]">
                    <label class="flex items-center gap-1.5 mt-3"><input type="checkbox" class="appearance-none size-[17px] bg-white border border-[#b4b4b4]">Center Axes Visibility</label>
                    <h3 class="mt-[11px] h-[17px] text-[13px] leading-4 font-bold border-b border-[#9f9f9f]">Orientation Axes</h3>
                    <label class="relative flex items-center gap-1.5 mt-2"><input type="checkbox" checked class="appearance-none size-[17px] bg-white border border-[#b4b4b4]">Orientation Axes Visibility
                        <svg class="absolute left-0 top-0 size-[17px]" viewBox="0 0 17 17"><path d="M4 8.500 7.500 13.500 13 3.500" fill="none" stroke="#000" stroke-width="2"/></svg>
                    </label>
                    <label class="flex items-center gap-1.5 mt-[9px]"><input type="checkbox" class="appearance-none size-[17px] bg-white border border-[#b4b4b4]">Orientation Axes Interactivity</label>
                    <div class="flex mt-[7px]">
                        <button aria-label="Label color" class="flex-1 h-[25px] pl-2 pb-2 rounded-[3px] border border-[#a9a9a9] bg-[#fafafa]"><span class="block size-3 rounded-full border-2 border-black"></span></button>
                        <button aria-label="Color options" class="w-[15px] h-[25px] rounded-[3px] border border-[#a9a9a9] bg-[#fafafa]"></button>
                    </div>
                </div>
                <div class="flex flex-col w-[17px] border-l border-[#b4b4b4] bg-[#e0e0e0]">
                    <button aria-label="Scroll up" class="h-[17px] grid place-items-center border-b border-[#c4c4c4] bg-[#fafafa]"><svg class="w-[9px] h-[5px]" viewBox="0 0 9 5"><path d="M0 5h9L4.500 0z" fill="#555"/></svg></button>
                    <span class="h-[85px] border-b border-[#b4b4b4] bg-linear-to-r from-[#fdfdfd] to-[#f0f0f0]"></span>
                    <button aria-label="Scroll down" class="mt-auto h-[17px] grid place-items-center border-t border-[#c4c4c4] bg-[#fafafa]"><svg class="w-[9px] h-[5px]" viewBox="0 0 9 5"><path d="M0 0h9L4.500 5z" fill="#555"/></svg></button>
                </div>
            </div>
        </aside>

        <div class="w-[7px] shrink-0 flex items-center justify-center"><svg class="w-1 h-[18px]"><use href="#grip"/></svg></div>

        <!-- Layout view -->
        <section class="flex flex-col flex-1 min-w-0 pt-px pb-1">
            <div class="flex items-end h-[30px]">
                <button class="flex items-center w-[123px] h-[30px] pl-[14px] border border-b-0 border-[#b4b4b4] rounded-t-[3px] bg-linear-to-b from-white to-[#f8f8f8]">
                    <svg class="size-4 mr-1" viewBox="0 0 16 16"><path d="M.7.700h14.600v14.600H.7z" fill="#f6f6f6" stroke="#333" stroke-width="1.400"/><path d="M0 0h16v5H0z" fill="#333"/></svg>
                    Layout #1
                    <svg class="size-3 ml-[3px]" viewBox="0 0 12 12"><use href="#boxx"/></svg>
                </button>
                <button class="w-9 h-7 pt-0.5 border border-l-0 border-[#b4b4b4] rounded-tr-[3px] bg-[#e6e6e6]">+</button>
                <span class="flex-1 border-b border-[#b4b4b4]"></span>
            </div>
            <div class="flex flex-col flex-1 min-h-0 pl-px border-l border-b border-[#b4b4b4]">
                <div class="flex items-center h-[27px] shrink-0">
                    <button aria-label="Undo camera" class="w-[26px] grid place-items-center"><svg class="size-[18px]" viewBox="0 0 18 18"><use href="#cam18"/><path d="M1 17v-7l2 2c4-4 9-3 9 2l-1 3c0-4-3-4-5-2l2 2z" fill="#e0252a"/></svg></button>
                    <button aria-label="Redo camera" class="w-[26px] grid place-items-center"><svg class="size-[18px] grayscale opacity-50" viewBox="0 0 18 18"><use href="#cam18"/><path d="M17 17v-7l-2 2c-4-4-9-3-9 2l1 3c0-4 3-4 5-2l-2 2z" fill="#ccc" stroke="#888"/></svg></button>
                    <span class="w-px h-4 mx-[3px] bg-[#cfcfcf]"></span>
                    <button aria-label="Capture screenshot" class="w-[26px] grid place-items-center"><svg class="size-[18px]" viewBox="0 0 18 18"><path d="M1 4V1h4M13 1h4v3M1 14v3h4M13 17h4v-3" fill="none" stroke="#999"/><use href="#cam18" x="1.500" y="2" width="15" height="15"/></svg></button>
                    <span class="w-px h-4 mx-[3px] bg-[#cfcfcf]"></span>
                    <button class="w-[26px] text-[11px] font-bold text-[#6b6b5c]">3D</button>
                    <button aria-label="Adjust camera" class="w-[26px] grid place-items-center"><svg class="size-[18px]" viewBox="0 0 18 18"><use href="#cam18"/><path d="M9 8l2 .5 6 7-2 2-6-7z" fill="#e2b33a" stroke="#8b6c26" stroke-width=".7"/></svg></button>
                    <span class="w-px h-4 mx-[3px] bg-[#cfcfcf]"></span>
                    <button aria-label="Add selection" class="w-[26px] grid place-items-center"><svg class="size-[18px]" viewBox="0 0 18 18"><use href="#select"/><path d="M7.500 5h3v2.500H13v3h-2.500V13h-3v-2.500H5v-3h2.500z" fill="#8fbf70" stroke="#6c8a55" stroke-width=".6"/></svg></button>
                    <button aria-label="Subtract selection" class="w-[26px] grid place-items-center"><svg class="size-[18px]" viewBox="0 0 18 18"><use href="#select"/><path d="M4 7.500h10v3H4z" fill="#e0252a"/></svg></button>
                    <button aria-label="Toggle selection" class="w-[26px] grid place-items-center"><svg class="size-[18px]" viewBox="0 0 18 18"><use href="#select"/><path d="M6 2h2v2.500h2.500v2H8V9H6V6.500H3.500v-2H6z" fill="#7fb060"/><path d="M3 11h7v3H3z" fill="#e0252a"/><use href="#cursor"/></svg></button>
                    <span class="w-px h-4 mx-[3px] bg-[#cfcfcf]"></span>
                    <button aria-label="Select cells on" class="w-[26px] grid place-items-center"><svg class="size-[18px]" viewBox="0 0 18 18"><use href="#select"/><path d="M9 4l5 9H4z" fill="#a6d189" stroke="#6c8a55"/><use href="#cursor"/></svg></button>
                    <button aria-label="Select points on" class="w-[26px] grid place-items-center"><svg class="size-[18px]" viewBox="0 0 18 18"><use href="#select"/><path d="M9 4l5 9M9 4 4 13" stroke="#bbb"/><circle cx="9" cy="3.500" r="1.300" fill="#8c4a36"/><circle cx="4" cy="13" r="1.300" fill="#d6392b"/><use href="#cursor"/></svg></button>
                    <button aria-label="Select cells through" class="w-[26px] grid place-items-center"><svg class="size-[18px]" viewBox="0 0 18 18"><path d="M2 7l6-5 9 1v7l-6 2-9-.5z" fill="#9ccb7d" stroke="#5f8a45"/><path d="M2 7l8 1 7-4M10 8v4" fill="none" stroke="#5f8a45"/><use href="#cursor"/></svg></button>
                    <button aria-label="Select points through" class="w-[26px] grid place-items-center"><svg class="size-[18px]" viewBox="0 0 18 18"><path d="M3 6l6-4 7 2v7l-6 3-7-1zM3 6l7 2 6-4M10 8v6" fill="none" stroke="#bbb" stroke-dasharray="2 1"/><g fill="#d6392b"><circle cx="3" cy="6" r="1"/><circle cx="9" cy="2" r="1"/><circle cx="16" cy="4" r="1"/><circle cx="3" cy="13" r="1"/><circle cx="10" cy="8" r="1"/><circle cx="10" cy="13" r="1"/></g><use href="#cursor"/></svg></button>
                    <button aria-label="Select cells with polygon" class="w-[26px] grid place-items-center"><svg class="size-[18px]" viewBox="0 0 18 18"><path d="M2 3h9l-1 4 6-3v8l-4 4-9-2z" fill="none" stroke="#999" stroke-dasharray="2 2"/><path d="M3 9l7-3v6z" fill="#8fbf70" stroke="#5f8a45"/><use href="#cursor"/></svg></button>
                    <button aria-label="Select points with polygon" class="w-[26px] grid place-items-center"><svg class="size-[18px]" viewBox="0 0 18 18"><path d="M2 2h9l5 2v8l-4 4-9-2z" fill="none" stroke="#aaa" stroke-dasharray="2 2"/><g fill="#b5392b"><circle cx="5" cy="5" r="1.300"/><circle cx="10" cy="4" r="1.300"/><circle cx="8" cy="8" r="1.300"/><circle cx="4" cy="10" r="1.300"/><circle cx="12" cy="10" r="1.300"/><circle cx="8" cy="13" r="1.300"/></g><use href="#cursor"/></svg></button>
                    <button aria-label="Select blocks" class="w-[26px] grid place-items-center"><svg class="size-[18px]" viewBox="0 0 18 18"><use href="#select"/><circle cx="6" cy="5" r="2.300" fill="#2e8bc4"/><circle cx="6" cy="12" r="2.300" fill="#2e8bc4"/><circle cx="12" cy="9.500" r="3" fill="#8fbf70" stroke="#5f8a45"/><use href="#cursor"/></svg></button>
                    <button aria-label="Select blocks through" class="w-[26px] grid place-items-center"><svg class="size-[18px]" viewBox="0 0 18 18"><path d="M4 6l6-4 7 1v7l-6 2-7-1z" fill="#8dbf6d" stroke="#5f8a45"/><path d="M4 5l5-2 3 1-2 4-6 1z" fill="#e2b33a"/><path d="M4 6l7 1 6-4M11 7v5" fill="none" stroke="#5f8a45"/><circle cx="2" cy="3" r="1.300" fill="#2e8bc4"/><circle cx="2" cy="13" r="1.300" fill="#2e8bc4"/><use href="#cursor"/></svg></button>
                    <button aria-label="Select block" class="w-[26px] grid place-items-center"><svg class="size-[18px]" viewBox="0 0 18 18"><path d="M2 7l5-5h9v8l-4 6H2z" fill="#c6c6c6" stroke="#999"/><path d="M2 7h9l5-5M11 7v9" fill="none" stroke="#999"/></svg></button>
                    <button aria-label="Interactive selection" class="w-[26px] grid place-items-center"><svg class="size-[18px] opacity-60" viewBox="0 0 18 18"><circle cx="7" cy="8" r="2.500" fill="#ccc" stroke="#999"/><use href="#cursor"/></svg></button>
                    <button aria-label="Interactive cells" class="w-[26px] grid place-items-center"><svg class="size-[18px]" viewBox="0 0 18 18"><path d="M9 4l5 9H4z" fill="#8fbf70" stroke="#6c8a55"/><use href="#cursor"/></svg></button>
                    <button aria-label="Interactive points" class="w-[26px] grid place-items-center"><svg class="size-[18px]" viewBox="0 0 18 18"><path d="M9 4l5 9H4z" fill="none" stroke="#bbb"/><circle cx="9" cy="4" r="1.300" fill="#c94536"/><circle cx="4" cy="13" r="1.300" fill="#d6392b"/><use href="#cursor"/></svg></button>
                    <button aria-label="Hover cells" class="w-[26px] grid place-items-center"><svg class="size-[18px]" viewBox="0 0 18 18"><path d="M6 8l5 8H1z" fill="#8fbf70" stroke="#6c8a55"/><path d="M10 4c1-4 7-3 6 1-.5 2-3 2-3 5M13 12v1.500" fill="none" stroke="#77755a" stroke-width="1.500"/></svg></button>
                    <button aria-label="Hover points" class="w-[26px] grid place-items-center"><svg class="size-[18px]" viewBox="0 0 18 18"><circle cx="6" cy="13" r="2.800" fill="#e0392b"/><path d="M10 4c1-4 7-3 6 1-.5 2-3 2-3 5M13 12v1.500" fill="none" stroke="#77755a" stroke-width="1.500"/></svg></button>
                    <button aria-label="Grow selection" class="w-[26px] grid place-items-center"><svg class="size-[18px]" viewBox="0 0 18 18"><path d="M6.500 2h5v4.500H16v5h-4.500V16h-5v-4.500H2v-5h4.500z" fill="#a0a0a0"/></svg></button>
                    <button aria-label="Shrink selection" class="w-[26px] grid place-items-center"><svg class="size-[18px]" viewBox="0 0 18 18"><path d="M2 6.500h14v5H2z" fill="#a0a0a0"/></svg></button>
                    <button aria-label="Clear selection" class="w-[26px] grid place-items-center"><svg class="size-[18px]" viewBox="0 0 18 18"><path d="M3 4.500h12L14 17.500H4z" fill="#9c9c9c"/><ellipse cx="9" cy="3.500" rx="7" ry="2.500" fill="#a9a9a9"/><path d="M6 7v9M9 7v9M12 7v9" stroke="#c4c4c4"/></svg></button>

                    <a href="#" class="ml-auto mr-[11px] text-[13px] font-bold underline">RenderView1</a>
                    <div class="flex gap-0.5 pr-0.5">
                        <button aria-label="Split horizontal" class="size-[25px] grid place-items-center rounded-[3px] border border-[#b4b4b4] bg-[#f8f8f8]"><svg class="size-[15px]" viewBox="0 0 15 15"><path d="M1 1h13v13H1zM7.500 1v13" fill="#d2d8ee" stroke="#a5a9b8"/></svg></button>
                        <button aria-label="Split vertical" class="size-[25px] grid place-items-center rounded-[3px] border border-[#b4b4b4] bg-[#f8f8f8]"><svg class="size-[15px]" viewBox="0 0 15 15"><path d="M1 1h13v13H1zM1 7.500h13" fill="#d2d8ee" stroke="#a5a9b8"/></svg></button>
                        <button aria-label="Maximize" class="size-[25px] grid place-items-center rounded-[3px] border border-[#b4b4b4] bg-[#f8f8f8]"><svg class="size-[18px]" viewBox="0 0 18 18"><path d="M.7.700h16.600v16.600H.7z" fill="#f8f8f8" stroke="#333" stroke-width="1.400"/><path d="M0 0h18v5H0z" fill="#333"/></svg></button>
                        <button aria-label="Close view" class="size-[25px] grid place-items-center rounded-[3px] border border-[#b4b4b4] bg-[#f8f8f8]"><svg class="size-3" viewBox="0 0 12 12"><use href="#boxx"/></svg></button>
                    </div>
                </div>
                <div class="relative flex-1 mr-px border-2 border-[#0000fe] bg-[#52576e] outline outline-white -outline-offset-3">
                    <!-- Orientation axes -->
                    <svg class="absolute left-[83px] bottom-[86px] w-20 h-20" viewBox="0 0 80 80" font-family="Liberation Sans" font-size="15" fill="#fff">
                        <path d="M17.500 64V24" stroke="#e0e000"/><path d="M17.500 11l4 11h-8z" fill="#e6e600"/><path d="M17 65h42" stroke="#e01010"/><path d="M73 65l-11-4v8z" fill="#f00000"/><circle cx="17.500" cy="65" r="5" fill="#006400"/>
                        <text x="19" y="20">Y</text><text x="21" y="64">Z</text><text x="65" y="65">X</text>
                    </svg>
                </div>
            </div>
        </section>
    </main>

    <!-- Status bar -->
    <footer class="flex items-center h-[26px] shrink-0">
        <button aria-label="Abort" class="ml-[33.25%] w-[19px] h-[19px] grid place-items-center rounded-[3px] border border-[#c4c4c4] bg-[#fafafa]"><svg class="size-2" viewBox="0 0 8 8"><path d="M1 1l6 6M7 1 1 7" stroke="#999" stroke-width="2.500"/></svg></button>
        <div class="ml-[3px] h-[25px] flex-1 border border-[#9f9f9f] border-b-white border-r-white"></div>
        <div class="relative ml-2 h-[25px] w-[637px] bg-white border border-[#a9a9a9] rounded-[2px]">
            <div class="h-full border border-[#a96a1f] bg-linear-to-b from-[#ffa73f] to-[#ef9122]" style="width: 86.9%"></div>
            <span class="absolute inset-0 grid place-items-center text-white">Mehul: 13.3 GiB/15.3 GiB 86.9%</span>
        </div>
    </footer>
</body>
</html>
